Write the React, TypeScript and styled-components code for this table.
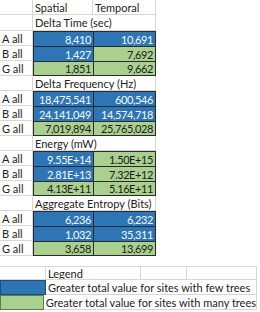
import styled, { createGlobalStyle } from "styled-components";

const GlobalStyle = createGlobalStyle`
  html, body {
    margin: 0;
    padding: 0;
    background: #ffffff;
  }
  body {
    font-family: Lato, "Liberation Sans", sans-serif;
    font-size: 11px;
    color: #222222;
  }
`;

const GRID = "#d6d6d6";
const DARK = "#2b2b2b";
const BLUE = "#2e75b6";
const GREEN = "#a9d08e";

const Sheet = styled.div`
  width: 260px;
  height: 312px;
  display: flex;
  flex-direction: column;
`;

const Table = styled.div`
  display: flex;
  flex-direction: column;
  width: 156px;
`;

const Row = styled.div<{ $h?: number }>`
  display: flex;
  height: ${(p) => p.$h ?? 15}px;
`;

const Cell = styled.div<{ $w: number }>`
  box-sizing: border-box;
  width: ${(p) => p.$w}px;
  height: 100%;
  border-right: 1px solid ${GRID};
  border-bottom: 1px solid ${GRID};
  padding-left: 2px;
  display: flex;
  align-items: center;
  white-space: nowrap;
  overflow: hidden;
`;

const Group = styled.div`
  display: flex;
`;

const Labels = styled.div`
  display: flex;
  flex-direction: column;
  width: 33px;
`;

const Block = styled.div`
  box-sizing: border-box;
  width: 123px;
  height: 45px;
  background: ${DARK};
  border: 1px solid ${DARK};
  display: grid;
  grid-template-columns: 59px 61px;
  grid-template-rows: 14px 14px 13px;
  gap: 1px;
`;

const Value = styled.div<{ $tone: "blue" | "green" }>`
  background: ${(p) => (p.$tone === "blue" ? BLUE : GREEN)};
  color: ${(p) => (p.$tone === "blue" ? "#f4f8fc" : "#1c1c1c")};
  display: flex;
  align-items: center;
  justify-content: flex-end;
  padding-right: 2px;
  letter-spacing: -0.4px;
`;

const Gap = styled.div`
  height: 10px;
`;

const Legend = styled.div`
  display: flex;
  flex-direction: column;
  width: 257px;
`;

const LegendHead = styled.div`
  display: flex;
  height: 14px;
  border-top: 1px solid ${GRID};
  box-sizing: border-box;
`;

const LegendRow = styled.div`
  display: flex;
  height: 15px;
`;

const Swatch = styled.div<{ $tone: "blue" | "green" }>`
  box-sizing: border-box;
  width: 46px;
  height: 100%;
  background: ${(p) => (p.$tone === "blue" ? BLUE : GREEN)};
  border: 1px solid ${(p) => (p.$tone === "blue" ? "#1f4e79" : "#5f7f4a")};
`;

const LegendText = styled.div`
  box-sizing: border-box;
  flex: 1;
  height: 100%;
  border-right: 1px solid ${GRID};
  border-bottom: 1px solid ${GRID};
  padding-left: 2px;
  display: flex;
  align-items: center;
  white-space: nowrap;
`;

type Tone = "blue" | "green";

interface Metric {
  title: string;
  rows: { label: string; cells: [string, Tone][] }[];
}

const metrics: Metric[] = [
  {
    title: "Delta Time (sec)",
    rows: [
      { label: "A all", cells: [["8,410", "blue"], ["10,691", "blue"]] },
      { label: "B all", cells: [["1,427", "blue"], ["7,692", "green"]] },
      { label: "G all", cells: [["1,851", "green"], ["9,662", "green"]] },
    ],
  },
  {
    title: "Delta Frequency (Hz)",
    rows: [
      { label: "A all", cells: [["18,475,541", "blue"], ["600,546", "blue"]] },
      { label: "B all", cells: [["24,141,049", "blue"], ["14,574,718", "blue"]] },
      { label: "G all", cells: [["7,019,894", "green"], ["25,765,028", "green"]] },
    ],
  },
  {
    title: "Energy (mW)",
    rows: [
      { label: "A all", cells: [["9.55E+14", "blue"], ["1.50E+15", "green"]] },
      { label: "B all", cells: [["2.81E+13", "blue"], ["7.32E+12", "green"]] },
      { label: "G all", cells: [["4.13E+11", "green"], ["5.16E+11", "green"]] },
    ],
  },
  {
    title: "Aggregate Entropy (Bits)",
    rows: [
      { label: "A all", cells: [["6,236", "blue"], ["6,232", "blue"]] },
      { label: "B all", cells: [["1,032", "blue"], ["35,311", "blue"]] },
      { label: "G all", cells: [["3,658", "green"], ["13,699", "green"]] },
    ],
  },
];

function MetricGroup({ metric, first }: { metric: Metric; first: boolean }) {
  return (
    <>
      <Row $h={first ? 16 : 15}>
        <Cell $w={33} />
        <Cell $w={123}>{metric.title}</Cell>
      </Row>
      <Group>
        <Labels>
          {metric.rows.map((r) => (
            <Row key={r.label}>
              <Cell $w={33}>{r.label}</Cell>
            </Row>
          ))}
        </Labels>
        <Block>
          {metric.rows.flatMap((r) =>
            r.cells.map(([v, tone], i) => (
              <Value key={r.label + i} $tone={tone}>
                {v}
              </Value>
            ))
          )}
        </Block>
      </Group>
    </>
  );
}

export default function App() {
  return (
    <>
      <GlobalStyle />
      <Sheet>
        <Table>
          <Row>
            <Cell $w={33} />
            <Cell $w={60}>Spatial</Cell>
            <Cell $w={63}>Temporal</Cell>
          </Row>
          {metrics.map((m, i) => (
            <MetricGroup key={m.title} metric={m} first={i === 0} />
          ))}
        </Table>
        <Gap />
        <Legend>
          <LegendHead>
            <Cell $w={46} />
            <Cell $w={95}>Legend</Cell>
            <Cell $w={46} />
            <Cell $w={70} />
          </LegendHead>
          <LegendRow>
            <Swatch $tone="blue" />
            <LegendText>Greater total value for sites with few trees</LegendText>
          </LegendRow>
          <LegendRow>
            <Swatch $tone="green" />
            <LegendText>Greater total value for sites with many trees</LegendText>
          </LegendRow>
        </Legend>
      </Sheet>
    </>
  );
}
